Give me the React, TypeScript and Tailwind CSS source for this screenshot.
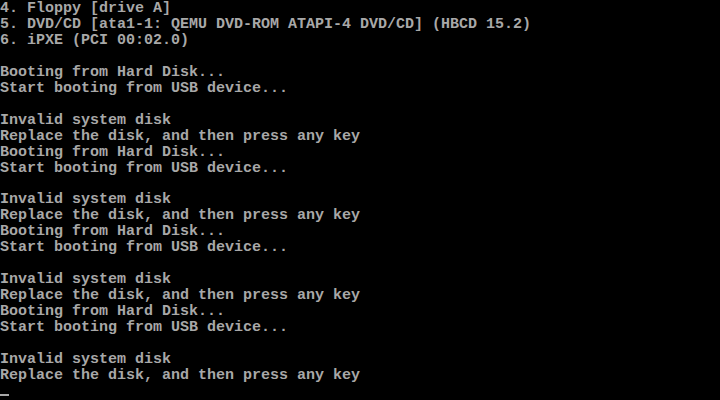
const lines = [
  "4. Floppy [drive A]",
  "5. DVD/CD [ata1-1: QEMU DVD-ROM ATAPI-4 DVD/CD] (HBCD 15.2)",
  "6. iPXE (PCI 00:02.0)",
  "",
  "Booting from Hard Disk...",
  "Start booting from USB device...",
  "",
  "Invalid system disk",
  "Replace the disk, and then press any key",
  "Booting from Hard Disk...",
  "Start booting from USB device...",
  "",
  "Invalid system disk",
  "Replace the disk, and then press any key",
  "Booting from Hard Disk...",
  "Start booting from USB device...",
  "",
  "Invalid system disk",
  "Replace the disk, and then press any key",
  "Booting from Hard Disk...",
  "Start booting from USB device...",
  "",
  "Invalid system disk",
  "Replace the disk, and then press any key",
];

export default function App() {
  return (
    <div className="flex h-[400px] w-[720px] flex-col overflow-hidden bg-black pt-px font-['Liberation_Mono',monospace] text-[15px] font-bold leading-4 text-[#a8a8a8]">
      {lines.map((line, i) => (
        <div key={i} className="h-4 whitespace-pre">
          {line}
        </div>
      ))}
      {/* blinking cursor row */}
      <div className="h-4 pt-[10px]">
        <div className="h-[2px] w-[9px] bg-[#a8a8a8]" />
      </div>
    </div>
  );
}
